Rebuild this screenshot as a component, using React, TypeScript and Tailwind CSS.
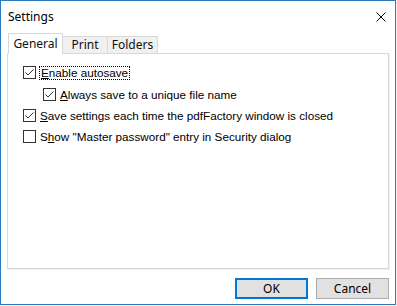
import React from 'react';

const sans = { fontFamily: '"Noto Sans", "Open Sans", sans-serif' };
const label = { fontFamily: '"Liberation Sans", Arial, sans-serif' };

function CheckBox({ checked }: { checked: boolean }) {
  return (
    <div className="w-[13px] h-[13px] shrink-0 border border-[#333333] bg-white flex items-center justify-center">
      {checked && (
        <svg width="11" height="11" viewBox="0 0 11 11">
          <polyline points="1.5,5.5 4,8 9.5,2.5" fill="none" stroke="#333333" strokeWidth="1" />
        </svg>
      )}
    </div>
  );
}

export default function App() {
  const tabs = ['General', 'Print', 'Folders'];

  return (
    <div className="w-[397px] h-[306px] bg-[#f4f4f4]">
      <div className="w-[396px] h-[305px] border border-[#2b7bc0] bg-white flex flex-col">
        {/* Title bar */}
        <div className="h-[31px] flex items-center justify-between pl-[7px] pr-[9px]">
          <span className="text-[12px] text-black leading-none" style={sans}>Settings</span>
          <svg width="10" height="10" viewBox="0 0 10 10">
            <path d="M0.5 0.5 L9.5 9.5 M9.5 0.5 L0.5 9.5" stroke="#000" strokeWidth="1" />
          </svg>
        </div>

        {/* Tabs */}
        <div className="flex items-end pl-[7px] h-[21px] mt-[1px] relative z-10">
          {tabs.map((t, i) =>
            i === 0 ? (
              <div
                key={t}
                className="h-[21px] w-[55px] bg-white border border-b-0 border-[#d9d9d9] flex items-center justify-center text-[12px] text-[#111]"
                style={sans}
              >
                {t}
              </div>
            ) : (
              <div
                key={t}
                className={`h-[17px] mb-[1px] bg-[#f0f0f0] border border-b-0 border-l-0 border-[#d9d9d9] flex items-center justify-center text-[12px] text-[#111] ${
                  i === 1 ? 'w-[45px]' : 'w-[50px]'
                }`}
                style={sans}
              >
                {t}
              </div>
            )
          )}
        </div>

        {/* Panel */}
        <div className="mx-[6px] -mt-[1px] h-[216px] border border-[#d9d9d9] bg-white shadow-[1px_1px_0_#efefef] pl-[15px] pt-[12px] text-[11.7px] text-black" style={label}>
          <div className="flex items-center h-[13px]">
            <CheckBox checked />
            <span className="ml-[3px] px-[1px] border border-dotted border-black leading-[12px]">
              <u>E</u>nable autosave
            </span>
          </div>
          <div className="flex items-center h-[13px] mt-[9px] pl-[20px]">
            <CheckBox checked />
            <span className="ml-[4px]">
              <u>A</u>lways save to a unique file name
            </span>
          </div>
          <div className="flex items-center h-[13px] mt-[8px]">
            <CheckBox checked />
            <span className="ml-[4px]">
              <u>S</u>ave settings each time the pdfFactory window is closed
            </span>
          </div>
          <div className="flex items-center h-[13px] mt-[8px]">
            <CheckBox checked={false} />
            <span className="ml-[4px]">
              S<u>h</u>ow "Master password" entry in Security dialog
            </span>
          </div>
        </div>

        {/* Buttons */}
        <div className="flex justify-end gap-[8px] mr-[6px] mt-[9px]">
          <button className="w-[73px] h-[21px] bg-[#e1e1e1] border-2 border-[#0078d7] text-[12px] text-black flex items-center justify-center" style={sans}>
            OK
          </button>
          <button className="w-[73px] h-[21px] bg-[#e1e1e1] border border-[#adadad] text-[12px] text-black flex items-center justify-center" style={sans}>
            Cancel
          </button>
        </div>
      </div>
    </div>
  );
}
